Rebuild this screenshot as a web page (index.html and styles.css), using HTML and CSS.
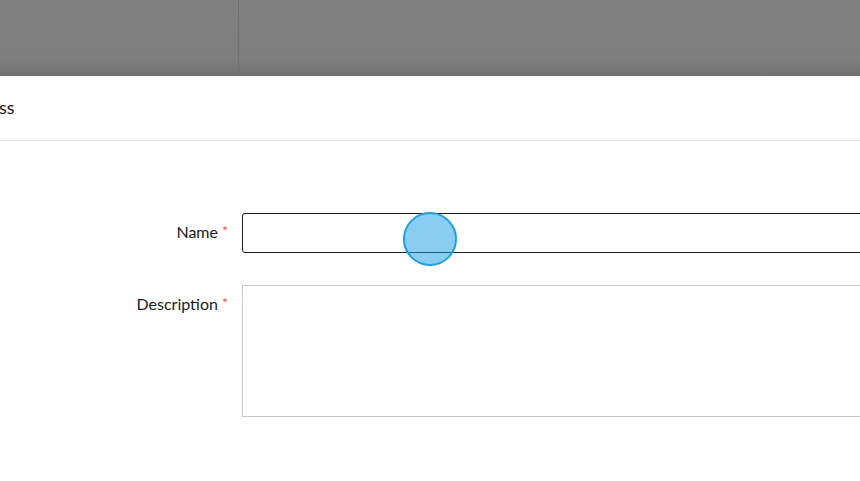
FILE: index.html
```html
<!DOCTYPE html>
<html>
<head>
<meta charset="utf-8">
<link rel="stylesheet" href="styles.css">
</head>
<body>
<div class="backdrop">
  <div class="bd-left"></div>
  <div class="bd-right"></div>
</div>
<div class="modal">
  <div class="modal-header"><span class="title">ss</span></div>
  <div class="modal-body">
    <div class="row">
      <label class="label">Name <span class="req">*</span></label>
      <div class="field"><input class="input" type="text"></div>
    </div>
    <div class="row">
      <label class="label">Description <span class="req">*</span></label>
      <div class="field"><textarea class="textarea"></textarea></div>
    </div>
    <div class="click-dot"></div>
  </div>
</div>
</body>
</html>
```
FILE: styles.css
```css
html, body {
  margin: 0;
  padding: 0;
  width: 860px;
  height: 481px;
  overflow: hidden;
  background: #fff;
  font-family: Lato, "Liberation Sans", sans-serif;
  color: #222;
}
.backdrop {
  display: flex;
  height: 76px;
  background: linear-gradient(to bottom, #808080 0%, #7f7f7f 75%, #727272 100%);
}
.bd-left {
  width: 238px;
  border-right: 1px solid #707070;
}
.bd-right {
  flex: 1;
}
.modal {
  position: relative;
  background: #fff;
}
.modal-header {
  height: 64px;
  border-bottom: 1px solid #dedede;
  display: flex;
  align-items: center;
}
.title {
  font-size: 18px;
  color: #1a1a1a;
  margin-left: -1px;
  margin-top: -2px;
}
.modal-body {
  position: relative;
  padding-top: 72px;
  display: flex;
  flex-direction: column;
  gap: 32px;
}
.row {
  display: flex;
  align-items: flex-start;
}
.label {
  flex: 0 0 228px;
  width: 228px;
  text-align: right;
  font-size: 16px;
  line-height: 18px;
  padding-top: 9px;
  color: #1a1a1a;
  box-sizing: border-box;
}
.req {
  color: #d9534f;
  font-size: 14px;
  vertical-align: 2px;
}
.field {
  margin-left: 14px;
  flex: 0 0 640px;
}
.input {
  display: block;
  width: 640px;
  height: 40px;
  box-sizing: border-box;
  border: 1px solid #1f1f1f;
  border-radius: 3px;
  outline: none;
  background: #fff;
}
.textarea {
  display: block;
  width: 640px;
  height: 132px;
  box-sizing: border-box;
  border: 1px solid #c8c8c8;
  border-radius: 0;
  resize: none;
  outline: none;
  background: #fff;
}
.click-dot {
  position: absolute;
  left: 403px;
  top: 71px;
  width: 50px;
  height: 50px;
  border-radius: 50%;
  background: rgba(30, 160, 230, 0.52);
  border: 2px solid #1ea0dc;
}
```
